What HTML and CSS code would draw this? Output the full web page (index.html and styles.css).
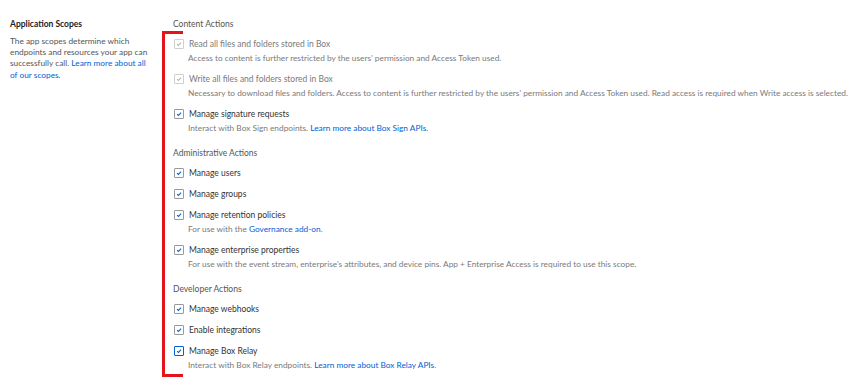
FILE: index.html
```html
<!DOCTYPE html>
<html lang="en">
<head>
    <meta charset="UTF-8">
    <title>Application Scopes</title>
    <link rel="stylesheet" href="styles.css">
</head>
<body>
    <div class="page">
        <!-- 左侧说明 -->
        <div class="intro">
            <h2 class="intro-title">Application Scopes</h2>
            <p class="intro-text">The app scopes determine which endpoints and resources your app can successfully call. <a href="#">Learn more about all of our scopes.</a></p>
        </div>

        <!-- 右侧权限列表 -->
        <div class="scopes">
            <h3 class="group-title first">Content Actions</h3>
            <div class="scope-list">
                <div class="scope disabled">
                    <div class="scope-row"><span class="box"><svg viewBox="0 0 10 10"><path d="M2.6 5.2 L4.3 6.8 L7.6 3.4"/></svg></span>Read all files and folders stored in Box</div>
                    <div class="scope-desc">Access to content is further restricted by the users' permission and Access Token used.</div>
                </div>
                <div class="scope disabled">
                    <div class="scope-row"><span class="box"><svg viewBox="0 0 10 10"><path d="M2.6 5.2 L4.3 6.8 L7.6 3.4"/></svg></span>Write all files and folders stored in Box</div>
                    <div class="scope-desc">Necessary to download files and folders. Access to content is further restricted by the users' permission and Access Token used. Read access is required when Write access is selected.</div>
                </div>
                <div class="scope">
                    <div class="scope-row"><span class="box"><svg viewBox="0 0 10 10"><path d="M2.6 5.2 L4.3 6.8 L7.6 3.4"/></svg></span>Manage signature requests</div>
                    <div class="scope-desc">Interact with Box Sign endpoints. <a href="#">Learn more about Box Sign APIs</a>.</div>
                </div>

                <h3 class="group-title">Administrative Actions</h3>
                <div class="scope">
                    <div class="scope-row"><span class="box"><svg viewBox="0 0 10 10"><path d="M2.6 5.2 L4.3 6.8 L7.6 3.4"/></svg></span>Manage users</div>
                </div>
                <div class="scope">
                    <div class="scope-row"><span class="box"><svg viewBox="0 0 10 10"><path d="M2.6 5.2 L4.3 6.8 L7.6 3.4"/></svg></span>Manage groups</div>
                </div>
                <div class="scope">
                    <div class="scope-row"><span class="box"><svg viewBox="0 0 10 10"><path d="M2.6 5.2 L4.3 6.8 L7.6 3.4"/></svg></span>Manage retention policies</div>
                    <div class="scope-desc">For use with the <a href="#">Governance add-on</a>.</div>
                </div>
                <div class="scope">
                    <div class="scope-row"><span class="box"><svg viewBox="0 0 10 10"><path d="M2.6 5.2 L4.3 6.8 L7.6 3.4"/></svg></span>Manage enterprise properties</div>
                    <div class="scope-desc">For use with the event stream, enterprise's attributes, and device pins. App + Enterprise Access is required to use this scope.</div>
                </div>

                <h3 class="group-title">Developer Actions</h3>
                <div class="scope">
                    <div class="scope-row"><span class="box"><svg viewBox="0 0 10 10"><path d="M2.6 5.2 L4.3 6.8 L7.6 3.4"/></svg></span>Manage webhooks</div>
                </div>
                <div class="scope">
                    <div class="scope-row"><span class="box"><svg viewBox="0 0 10 10"><path d="M2.6 5.2 L4.3 6.8 L7.6 3.4"/></svg></span>Enable integrations</div>
                </div>
                <div class="scope last">
                    <div class="scope-row"><span class="box focused"><svg viewBox="0 0 10 10"><path d="M2.6 5.2 L4.3 6.8 L7.6 3.4"/></svg></span>Manage Box Relay</div>
                    <div class="scope-desc">Interact with Box Relay endpoints. <a href="#">Learn more about Box Relay APIs</a>.</div>
                </div>
            </div>
        </div>
    </div>
</body>
</html>
```

FILE: styles.css
```css
body {
    margin: 0;
    font-family: Lato, 'Liberation Sans', sans-serif;
    background-color: #ffffff;
    color: #222222;
}
a {
    color: #0061d5;
    text-decoration: none;
}
.page {
    display: flex;
    padding-top: 18px;
}

/* 左侧说明 */
.intro {
    width: 142px;
    padding-left: 10px;
    margin-right: 10px;
    flex-shrink: 0;
}
.intro-title {
    margin: 0 0 6px;
    font-size: 8.5px;
    line-height: 12px;
    font-weight: 700;
    color: #222222;
}
.intro-text {
    margin: 0;
    font-size: 8.3px;
    line-height: 11.2px;
    color: #555555;
}

/* 右侧权限列表 */
.scopes {
    flex: 1;
    white-space: nowrap;
}
.group-title {
    margin: 4px 0 8px;
    font-size: 8.5px;
    line-height: 12px;
    font-weight: 400;
    color: #555555;
}
.group-title.first {
    margin: 0 0 1px;
    padding-left: 11px;
}
.scope-list {
    position: relative;
    border-left: 3px solid #e3141c;
    padding: 7px 0 0 8px;
}
/* 红色括号的上下横线 */
.scope-list::before,
.scope-list::after {
    content: '';
    position: absolute;
    left: -3px;
    width: 21px;
    height: 3px;
    background: #e3141c;
}
.scope-list::before {
    top: 0;
}
.scope-list::after {
    bottom: 0;
}
.scope {
    padding-bottom: 9px;
}
.scope.last {
    padding-bottom: 6px;
}
.scope-row {
    display: flex;
    align-items: center;
    height: 12px;
    font-size: 8.5px;
    line-height: 12px;
    color: #333333;
}
.scope.disabled .scope-row {
    color: #7a7a7a;
}
.scope-desc {
    margin-top: 3px;
    padding-left: 15px;
    height: 11px;
    font-size: 8.3px;
    line-height: 11px;
    color: #7a7a7a;
}

/* 复选框 */
.box {
    width: 8px;
    height: 8px;
    margin: 0 5px 0 1px;
    border: 1px solid #9a9a9a;
    border-radius: 1px;
    background: #ffffff;
    flex-shrink: 0;
}
.box svg {
    display: block;
    width: 8px;
    height: 8px;
}
.box path {
    fill: none;
    stroke: #0061d5;
    stroke-width: 1.3;
}
.scope.disabled .box {
    border-color: #cfcfcf;
}
.scope.disabled .box path {
    stroke: #b5b5b5;
}
.box.focused {
    border-color: #0061d5;
}
```
